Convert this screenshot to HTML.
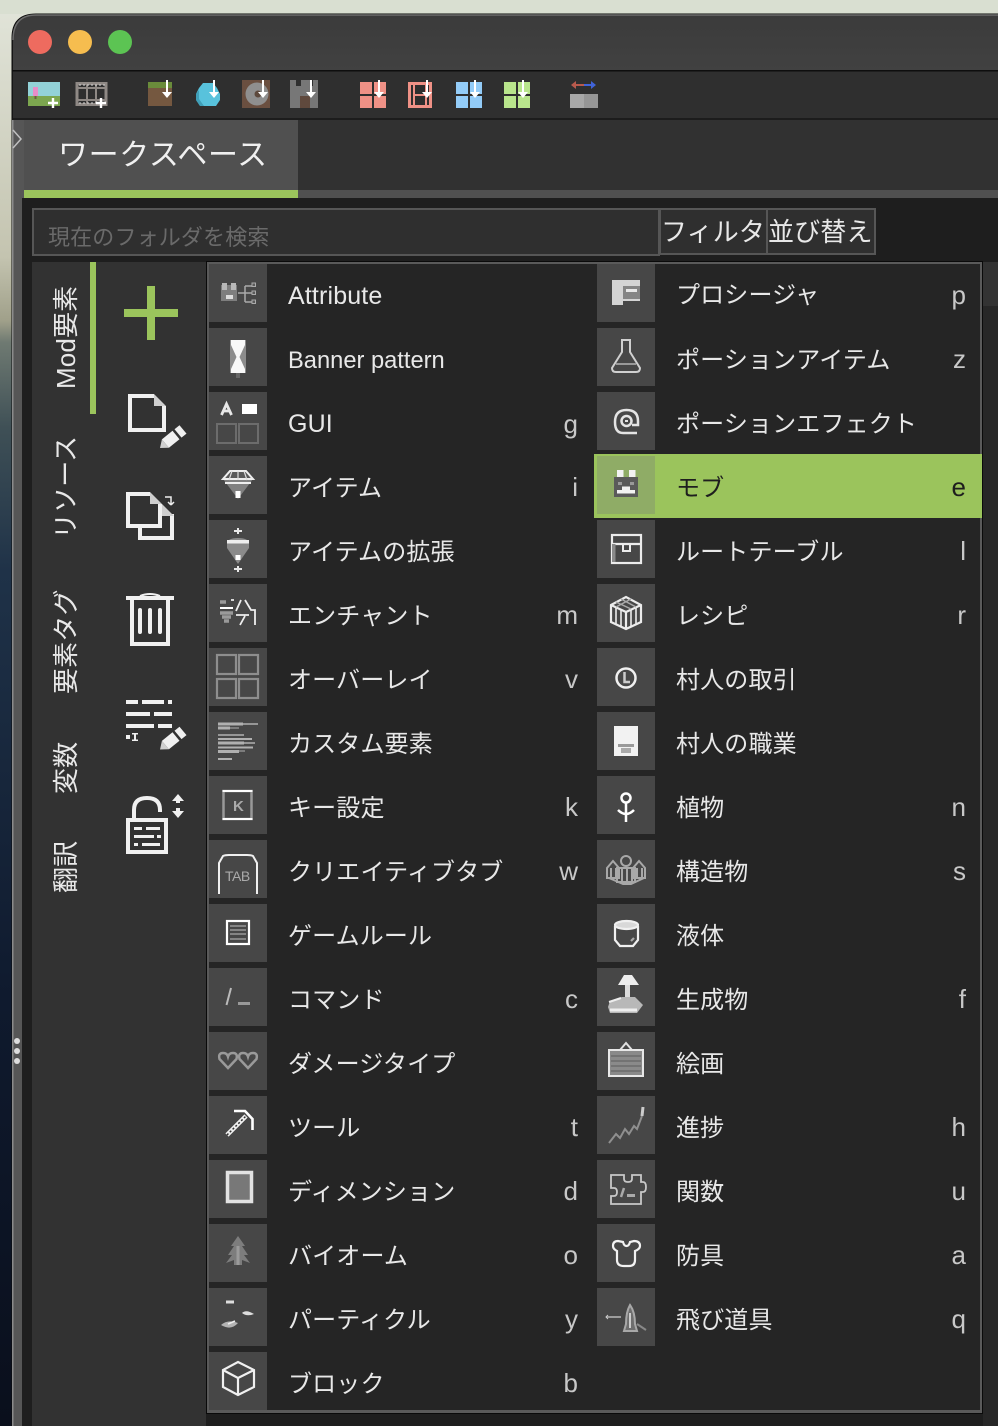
<!DOCTYPE html>
<html lang="ja"><head><meta charset="utf-8"><title>MCreator</title>
<style>
html,body{margin:0;padding:0;background:#1e1e1e}
svg{display:block}
text{font-family:"Liberation Sans","Noto Sans CJK JP",sans-serif;fill:#e8e8e8;font-size:24px;letter-spacing:.15px}
.s{fill:#c8c8c8;text-anchor:end;font-size:26px;letter-spacing:0}
</style></head><body>
<svg width="998" height="1426" viewBox="0 0 998 1426" xmlns="http://www.w3.org/2000/svg">
<defs>
<linearGradient id="bg" x1="0" y1="0" x2="0" y2="1">
<stop offset="0" stop-color="#e2e5da"/><stop offset=".18" stop-color="#c4c4b0"/><stop offset=".225" stop-color="#a0a08a"/><stop offset=".24" stop-color="#6f7a72"/><stop offset=".3" stop-color="#3f5056"/><stop offset=".4" stop-color="#1f3248"/><stop offset=".7" stop-color="#0f1a2e"/><stop offset="1" stop-color="#0a0f1c"/>
</linearGradient>
<linearGradient id="tb" x1="0" y1="0" x2="0" y2="1"><stop offset="0" stop-color="#3b3b3b"/><stop offset="1" stop-color="#414141"/></linearGradient>
<filter id="b" x="-2%" y="-2%" width="104%" height="104%"><feGaussianBlur stdDeviation=".35"/></filter>
</defs>
<!-- desktop -->
<rect width="998" height="1426" fill="url(#bg)"/>
<rect x="0" y="0" width="998" height="14" fill="#d9dfd1"/>
<!-- window -->
<path d="M12 1426V38Q12 14 36 14H998V1426Z" fill="#1e1e1e" stroke="#0c0c0c" stroke-width="1"/>
<path d="M13 70V38Q13 15 36 15H998V70Z" fill="url(#tb)"/>
<path d="M13 40Q13 15 36 15H998" fill="none" stroke="#6c6c6c" stroke-width="1.500"/>
<rect x="12" y="70" width="986" height="1.500" fill="#0e0e0e"/>
<rect x="13" y="71.500" width="985" height="46.500" fill="#2f2f2f"/>
<rect x="13" y="118" width="985" height="2" fill="#1c1c1c"/>
<circle cx="40" cy="42" r="12" fill="#ee6b5f"/><circle cx="80" cy="42" r="12" fill="#f6bd4f"/><circle cx="120" cy="42" r="12" fill="#5cc453"/>
<!-- toolbar icons -->
<g filter="url(#b)">
<rect x="28" y="82" width="32" height="14" fill="#93d2d8"/><rect x="28" y="96" width="32" height="10" fill="#7ba64f"/><rect x="33" y="87" width="5" height="9" fill="#e78dc8"/><rect x="34.500" y="96" width="2" height="3" fill="#6b5b3e"/>
<path d="M48 103H58M53 98V108" stroke="#fff" stroke-width="2.400"/>
<rect x="77" y="83.500" width="29" height="21" fill="none" stroke="#8f8985" stroke-width="3"/><path d="M77 88H106M77 100H106M87 84V105M96 84V105" stroke="#8f8985" stroke-width="2"/><path d="M79 85H105M79 103H105" stroke="#d8d8d8" stroke-width="1" stroke-dasharray="2 2"/>
<path d="M96 103H106M101 98V108" stroke="#fff" stroke-width="2.400"/>
<rect x="148" y="82" width="24" height="24" fill="#75583f"/><rect x="148" y="82" width="24" height="6" fill="#6a8c3b"/>
<path d="M203 83H213L217 88 220 94V100L216 106H200L196 100V94L199 88Z" fill="#58c2dc"/><path d="M196 94V100L200 106H204L199 99V90Z" fill="#3f9fb8"/>
<rect x="242" y="80" width="28" height="28" fill="#6a4f40"/><circle cx="257" cy="94" r="11.500" fill="#8f8f8f"/><circle cx="258" cy="94" r="3.500" fill="#5d4a3e"/>
<path d="M290 80h6v6h5v-6h11v6h1v-6h5v28h-28Z" fill="#777"/><rect x="300" y="96" width="10" height="12" fill="#5e4a3c"/>
<g fill="#ef9186"><rect x="360" y="82" width="12" height="12"/><rect x="374" y="82" width="12" height="12"/><rect x="360" y="96" width="12" height="12"/><rect x="374" y="96" width="12" height="12"/></g>
<rect x="409.500" y="83.500" width="21" height="23" fill="#2f2f2f" stroke="#ef9186" stroke-width="3"/><path d="M414 84V106M426 84V106M414 95H426" stroke="#ef9186" stroke-width="2"/>
<g fill="#93ccf8"><rect x="456" y="82" width="12" height="12"/><rect x="470" y="82" width="12" height="12"/><rect x="456" y="96" width="12" height="12"/><rect x="470" y="96" width="12" height="12"/></g>
<g fill="#b9e58c"><rect x="504" y="82" width="12" height="12"/><rect x="518" y="82" width="12" height="12"/><rect x="504" y="96" width="12" height="12"/><rect x="518" y="96" width="12" height="12"/></g>
<g fill="#fff" stroke="none">
<path d="M166 80h2v12h4l-5 6-5-6h4Z"/>
<path d="M213 80h2v12h4l-5 6-5-6h4Z"/><path d="M262 80h2v12h4l-5 6-5-6h4Z"/><path d="M310 80h2v12h4l-5 6-5-6h4Z"/><path d="M378 80h2v12h4l-5 6-5-6h4Z"/><path d="M426 80h2v12h4l-5 6-5-6h4Z"/><path d="M474 80h2v12h4l-5 6-5-6h4Z"/><path d="M522 80h2v12h4l-5 6-5-6h4Z"/>
</g>
<path d="M575 85H584" stroke="#b85a4e" stroke-width="2"/><path d="M571 85l5-4v8Z" fill="#b85a4e"/><path d="M584 85H592" stroke="#3f63d8" stroke-width="2"/><path d="M596 85l-5-4v8Z" fill="#3f63d8"/>
<rect x="570" y="94" width="14" height="14" fill="#a8a8a8"/><rect x="584" y="94" width="14" height="14" fill="#969696"/>
</g>
<!-- tab strip -->
<rect x="12" y="120" width="986" height="70" fill="#313131"/>
<rect x="24" y="120" width="274" height="70" fill="#505050"/>
<rect x="24" y="190" width="974" height="8" fill="#505050"/>
<rect x="24" y="190" width="274" height="8" fill="#9bc45c"/>
<text x="58" y="165" style="font-size:30px;fill:#f0f0f0;letter-spacing:.6px">ワークスペース</text>
<rect x="24" y="198" width="974" height="1228" fill="#1e1e1e"/>
<!-- left strip -->
<rect x="12" y="120" width="12" height="78" fill="#565656"/>
<rect x="12" y="198" width="10" height="1228" fill="#565656"/>
<rect x="12" y="120" width="1.500" height="1306" fill="#8b8b8b"/>
<rect x="22" y="198" width="10" height="1228" fill="#1e1e1e"/>
<path d="M13 130L21 139 13 148" fill="none" stroke="#c0c0c0" stroke-width="1.500"/>
<circle cx="17" cy="1041" r="3" fill="#ddd"/><circle cx="17" cy="1051" r="3" fill="#ddd"/><circle cx="17" cy="1061" r="3" fill="#ddd"/>
<!-- search -->
<rect x="33" y="209" width="626" height="46" fill="#2f2f2f" stroke="#565656" stroke-width="2"/>
<text x="48" y="245" style="font-size:22px;fill:#6a6a6a">現在のフォルダを検索</text>
<rect x="660" y="209" width="107" height="45" fill="#2f2f2f" stroke="#565656" stroke-width="2"/>
<rect x="767" y="209" width="108" height="45" fill="#2f2f2f" stroke="#565656" stroke-width="2"/>
<text x="661" y="241" style="font-size:26px">フィルタ</text>
<text x="768" y="241" style="font-size:26px">並び替え</text>
<!-- sidebar -->
<rect x="32" y="262" width="174" height="1164" fill="#323232"/>
<rect x="90" y="262" width="6" height="152" fill="#9bc45c"/>
<text transform="translate(75,389) rotate(-90)" style="font-size:26px">Mod要素</text>
<text transform="translate(75,539) rotate(-90)" style="font-size:26px">リソース</text>
<text transform="translate(75,694) rotate(-90)" style="font-size:26px">要素タグ</text>
<text transform="translate(75,794) rotate(-90)" style="font-size:26px">変数</text>
<text transform="translate(75,893) rotate(-90)" style="font-size:26px">翻訳</text>
<!-- sidebar icons -->
<path d="M124 313H178M151 286V340" stroke="#9bc45c" stroke-width="8"/>
<g fill="none" stroke="#f0f0f0" stroke-width="4">
<path d="M154 396H130V430H164V406"/>
<path d="M140 528V538H172V514"/>
<path d="M150 494H128V526H160V504"/>
<path d="M132 600V644H168V600"/>
<path d="M126 598H174"/><path d="M140 596Q150 592 160 596" stroke-width="2"/>
<path d="M140 610V632M150 610V632M160 610V632" stroke-linecap="round"/>
<path d="M134 819V810Q134 798 147 798Q160 798 160 810V812"/>
<rect x="128" y="820" width="38" height="32"/>
</g>
<path d="M154 394L166 406H154Z" fill="#cfcfcf"/><path d="M150 492L162 504H150Z" fill="#cfcfcf"/><path d="M162 504L174 516H162Z" fill="#cfcfcf"/>
<path d="M165 497H171V504M171 505l-3-3M171 505l3-3" fill="none" stroke="#eee" stroke-width="1.500"/>
<g fill="#f0f0f0">
<g id="pen"><path d="M160 448L161.900 439.400 165.400 443.600 168.900 447.800Z" fill="#cfcfcf"/><path d="M161.900 439.400L172.500 430.800 179.500 439.200 168.900 447.800Z"/><path d="M174.500 429.200L179.500 425.200 186.500 433.600 181.500 437.600Z"/></g>
<g transform="translate(0,301.500)"><path d="M160 448L161.900 439.400 165.400 443.600 168.900 447.800Z" fill="#cfcfcf"/><path d="M161.900 439.400L172.500 430.800 179.500 439.200 168.900 447.800Z"/><path d="M174.500 429.200L179.500 425.200 186.500 433.600 181.500 437.600Z"/></g>
<rect x="126" y="700" width="12" height="4"/><rect x="142" y="700" width="22" height="4"/><rect x="168" y="700" width="4" height="4"/>
<rect x="126" y="712" width="24" height="4"/><rect x="154" y="712" width="18" height="4"/>
<rect x="126" y="724" width="28" height="4"/><rect x="158" y="724" width="14" height="4"/>
<rect x="126" y="735" width="4" height="4"/><path d="M132 733h6v1.500h-2v5h2v1.500h-6v-1.500h2v-5h-2Z"/>
<rect x="134" y="827" width="8" height="3"/><rect x="146" y="827" width="14" height="3"/>
<rect x="134" y="835" width="20" height="3"/><rect x="157" y="835" width="4" height="3"/>
<rect x="134" y="843" width="4" height="3"/><rect x="142" y="843" width="18" height="3"/>
<path d="M178 794l6 7h-4v2h-4v-2h-4ZM178 818l-6-7h4v-3h4v3h4Z"/>
</g>
<!-- right side behind popup -->
<rect x="983" y="262" width="15" height="44" fill="#333"/><rect x="983" y="306" width="15" height="1120" fill="#272727"/>
<!-- popup -->
<rect x="206.500" y="261.500" width="776" height="1152" fill="#0a0a0a" stroke="#0a0a0a"/>
<rect x="207" y="262" width="775" height="1151" fill="#5a5a5a"/>
<rect x="209" y="264" width="771" height="1146" fill="#252525"/>
<!-- highlight -->
<rect x="594" y="454" width="388" height="64" fill="#9bc45c"/>
<!-- icon boxes -->
<g fill="#474747">
<rect x="209" y="264" width="58" height="58"/><rect x="209" y="328" width="58" height="58"/><rect x="209" y="392" width="58" height="58"/><rect x="209" y="456" width="58" height="58"/><rect x="209" y="520" width="58" height="58"/><rect x="209" y="584" width="58" height="58"/><rect x="209" y="648" width="58" height="58"/><rect x="209" y="712" width="58" height="58"/><rect x="209" y="776" width="58" height="58"/><rect x="209" y="840" width="58" height="58"/><rect x="209" y="904" width="58" height="58"/><rect x="209" y="968" width="58" height="58"/><rect x="209" y="1032" width="58" height="58"/><rect x="209" y="1096" width="58" height="58"/><rect x="209" y="1160" width="58" height="58"/><rect x="209" y="1224" width="58" height="58"/><rect x="209" y="1288" width="58" height="58"/><rect x="209" y="1352" width="58" height="58"/>
<rect x="597" y="264" width="58" height="58"/><rect x="597" y="328" width="58" height="58"/><rect x="597" y="392" width="58" height="58"/><rect x="597" y="520" width="58" height="58"/><rect x="597" y="584" width="58" height="58"/><rect x="597" y="648" width="58" height="58"/><rect x="597" y="712" width="58" height="58"/><rect x="597" y="776" width="58" height="58"/><rect x="597" y="840" width="58" height="58"/><rect x="597" y="904" width="58" height="58"/><rect x="597" y="968" width="58" height="58"/><rect x="597" y="1032" width="58" height="58"/><rect x="597" y="1096" width="58" height="58"/><rect x="597" y="1160" width="58" height="58"/><rect x="597" y="1224" width="58" height="58"/><rect x="597" y="1288" width="58" height="58"/>
</g>
<rect x="597" y="456" width="58" height="58" fill="#8fac66"/>
<!-- labels left -->
<text x="288" y="304" style="font-size:25px">Attribute</text>
<text x="288" y="368" style="font-size:23.700px;letter-spacing:0">Banner pattern</text>
<text x="288" y="432" style="font-size:25px">GUI</text><text class="s" x="578" y="433">g</text>
<text x="288" y="496">アイテム</text><text class="s" x="578" y="496">i</text>
<text x="288" y="560">アイテムの拡張</text>
<text x="288" y="624">エンチャント</text><text class="s" x="578" y="624">m</text>
<text x="288" y="688">オーバーレイ</text><text class="s" x="578" y="688">v</text>
<text x="288" y="752">カスタム要素</text>
<text x="288" y="816">キー設定</text><text class="s" x="578" y="816">k</text>
<text x="288" y="880">クリエイティブタブ</text><text class="s" x="578" y="880">w</text>
<text x="288" y="944">ゲームルール</text>
<text x="288" y="1008">コマンド</text><text class="s" x="578" y="1008">c</text>
<text x="288" y="1072">ダメージタイプ</text>
<text x="288" y="1136">ツール</text><text class="s" x="578" y="1136">t</text>
<text x="288" y="1200">ディメンション</text><text class="s" x="578" y="1200">d</text>
<text x="288" y="1264">バイオーム</text><text class="s" x="578" y="1264">o</text>
<text x="288" y="1328">パーティクル</text><text class="s" x="578" y="1328">y</text>
<text x="288" y="1392">ブロック</text><text class="s" x="578" y="1392">b</text>
<!-- labels right -->
<text x="676" y="303">プロシージャ</text><text class="s" x="966" y="304">p</text>
<text x="676" y="368">ポーションアイテム</text><text class="s" x="966" y="368">z</text>
<text x="676" y="432">ポーションエフェクト</text>
<text x="676" y="496" style="fill:#1e1e1e">モブ</text><text class="s" x="966" y="496" style="fill:#1e1e1e">e</text>
<text x="676" y="560">ルートテーブル</text><text class="s" x="966" y="560">l</text>
<text x="676" y="624">レシピ</text><text class="s" x="966" y="624">r</text>
<text x="676" y="688">村人の取引</text>
<text x="676" y="752">村人の職業</text>
<text x="676" y="816">植物</text><text class="s" x="966" y="816">n</text>
<text x="676" y="880">構造物</text><text class="s" x="966" y="880">s</text>
<text x="676" y="944">液体</text>
<text x="676" y="1008">生成物</text><text class="s" x="966" y="1008">f</text>
<text x="676" y="1072">絵画</text>
<text x="676" y="1136">進捗</text><text class="s" x="966" y="1136">h</text>
<text x="676" y="1200">関数</text><text class="s" x="966" y="1200">u</text>
<text x="676" y="1264">防具</text><text class="s" x="966" y="1264">a</text>
<text x="676" y="1328">飛び道具</text><text class="s" x="966" y="1328">q</text>
<!-- menu icons -->
<g filter="url(#b)">
<g transform="translate(209,264)">
<rect x="12" y="21" width="16" height="16" fill="#7e7e7e"/><rect x="13" y="19" width="5" height="7" fill="#b8b8b8"/><rect x="22" y="19" width="5" height="7" fill="#b8b8b8"/><rect x="17" y="31" width="7" height="4" fill="#ddd"/>
<path d="M29 29H44M36 22V38M36 22H43M36 38H43" stroke="#aaa" stroke-width="1.500" fill="none"/><g fill="#5a5a5a" stroke="#aaa" stroke-width="1"><rect x="43" y="19" width="3.500" height="3.500"/><rect x="43" y="27" width="3.500" height="3.500"/><rect x="43" y="36" width="3.500" height="3.500"/></g>
</g>
<g transform="translate(209,328)">
<rect x="21" y="12" width="16" height="33" fill="#8c8c8c"/><path d="M22 12H36V17L30.500 29 36 41V45H22V41L27.500 29 22 17Z" fill="#f8f8f8"/><rect x="27" y="45" width="4" height="5" fill="#666"/>
</g>
<g transform="translate(209,392)">
<path d="M12.500 23L17.500 12 22.500 23M15 19H20" fill="none" stroke="#e8e8e8" stroke-width="2.800"/><rect x="33" y="12" width="15" height="10" fill="#fff"/>
<rect x="8" y="32" width="19" height="19" fill="none" stroke="#6c6c6c" stroke-width="2"/><rect x="30" y="32" width="19" height="19" fill="none" stroke="#6c6c6c" stroke-width="2"/>
</g>
<g transform="translate(209,456)">
<path d="M21 15H37L44 23 29 43 14 23Z" fill="#808080"/><path d="M21 15H37L44 23 H14Z" fill="#5a5a5a" stroke="#eee" stroke-width="2"/><path d="M16 27H42" stroke="#eee" stroke-width="2"/><path d="M23 15L20 24M35 15L38 24M29 15V24" stroke="#ddd" stroke-width="1.200"/><rect x="26.500" y="35" width="5" height="7" fill="#fff"/>
</g>
<g transform="translate(209,520)">
<path d="M25 11H33M29 8V14M25 49H33M29 46V52" stroke="#e8e8e8" stroke-width="2"/><path d="M18 24Q18 18 29 18Q40 18 40 24V28L29 44 18 28Z" fill="#8a8a8a"/><rect x="18" y="20" width="22" height="3.500" fill="#eee"/><rect x="26.500" y="35" width="5" height="5" fill="#fff"/>
</g>
<g transform="translate(209,584)">
<path d="M11 18H17M11 29H24M13 33H22M15 37H20" stroke="#9a9a9a" stroke-width="3.500" fill="none"/><path d="M11 24H24" stroke="#fff" stroke-width="2"/>
<path d="M22 16H25M32 16L27 27M36 16L42 26H46V41M27 31H40M36 32L31 41" stroke="#eee" stroke-width="1.800" fill="none"/>
</g>
<g transform="translate(209,648)" fill="none" stroke="#8e8e8e" stroke-width="2.200"><rect x="8" y="7" width="19" height="19"/><rect x="30" y="7" width="19" height="19"/><rect x="8" y="31" width="19" height="19"/><rect x="30" y="31" width="19" height="19"/></g>
<g transform="translate(209,712)" stroke="#b0b0b0" fill="none">
<path d="M9 12H34" stroke-width="3"/><path d="M34 12H49" stroke-width="1.500"/><path d="M9 16H21" stroke-width="3"/><path d="M21 16H30" stroke-width="1"/><path d="M9 23H35" stroke-width="1.500"/><path d="M9 27H43" stroke-width="2"/><path d="M9 31H35" stroke-width="3"/><path d="M35 31H46" stroke-width="1.500"/><path d="M9 35.500H44" stroke-width="2"/><path d="M9 39.500H30" stroke-width="3"/><path d="M30 39H36" stroke-width="1"/><path d="M9 47H23" stroke-width="2"/>
</g>
<g transform="translate(209,776)">
<rect x="14.500" y="15" width="28" height="28" fill="none" stroke="#999" stroke-width="2.500"/><path d="M13.500 15H43.500M13.500 43H43.500" stroke="#fff" stroke-width="2"/>
<text x="24" y="35" style="font-size:15px;fill:#aaa;font-weight:bold">K</text>
</g>
<g transform="translate(209,840)">
<path d="M10 54V23L14 16Q16 15 20 15H38Q42 15 44 16L48 23V54" fill="none" stroke="#f0f0f0" stroke-width="2"/>
<text x="16" y="41" style="font-size:14px;fill:#aaa;letter-spacing:-.5px">TAB</text>
</g>
<g transform="translate(209,904)">
<rect x="18" y="17" width="22" height="23" fill="none" stroke="#fff" stroke-width="2.200"/><path d="M21 22H37M21 26H37M21 30H37M21 35H37" stroke="#999" stroke-width="1.600"/>
</g>
<g transform="translate(209,968)">
<path d="M22 20L17.500 37" stroke="#bbb" stroke-width="2"/><rect x="29" y="34" width="12" height="3" fill="#999"/>
</g>
<g transform="translate(209,1032)" fill="none" stroke="#9a9a9a" stroke-width="2.500">
<path d="M19 36L10.500 27Q9 21 14 21Q18 21 19 24.500Q20 21 24 21Q29 21 27.500 27Z"/><path d="M39 36L30.500 27Q29 21 34 21Q38 21 39 24.500Q40 21 44 21Q49 21 47.500 27Z"/>
</g>
<g transform="translate(209,1096)">
<path d="M18 39L37 20" stroke="#f0f0f0" stroke-width="4.500"/><path d="M18 39L37 20" stroke="#333" stroke-width="1.500" stroke-dasharray="2 2"/><path d="M25 15H36L43.500 23V34" fill="none" stroke="#fff" stroke-width="2.600"/>
</g>
<g transform="translate(209,1160)">
<rect x="18.500" y="12.500" width="24" height="29" fill="#787878" stroke="#e2e2e2" stroke-width="3.500"/>
</g>
<g transform="translate(209,1224)" fill="#7d7d7d">
<path d="M29 12L36 22H33L39 31H35L41 39 33 36V41H25V36L17 39 23 31H19L25 22H22Z"/><rect x="27.500" y="22" width="3" height="19" fill="#9b9b9b"/>
</g>
<g transform="translate(209,1288)">
<path d="M17 14H25" stroke="#ddd" stroke-width="3"/><path d="M33 25Q37 21 45 26 38 29 33 25Z" fill="#ddd"/><path d="M12 37Q19 31 29 35 22 43 12 37Z" fill="#b4b4b4"/><path d="M19 36L26 33" stroke="#eee" stroke-width="1.500"/>
</g>
<g transform="translate(209,1352)" fill="none" stroke="#f0f0f0" stroke-width="2.200">
<path d="M29 10L45 18V35L29 43 14 35V18ZM14 18L29 26 45 18M29 26V43"/>
</g>
<g transform="translate(597,264)">
<path d="M15 16H43V37H26V41H15Z" fill="#d4d4d4"/><rect x="26" y="22" width="17" height="13" fill="#858585"/><rect x="29" y="25" width="11" height="3" fill="#e8e8e8"/>
</g>
<g transform="translate(597,328)" fill="none" stroke="#d0d0d0" stroke-width="2">
<path d="M24 12H34M25 13V24L15 40Q15 44 19 44H39Q43 44 43 40L33 24V13"/><path d="M19 36H39" stroke="#999"/>
</g>
<g transform="translate(597,392)" fill="none" stroke="#e4e4e4" stroke-width="2.500">
<path d="M40 41H26Q18 41 18 30Q18 18 29.500 18Q41 18 41 29V33H35"/><circle cx="29.500" cy="29" r="5"/><rect x="28" y="28" width="3" height="2" fill="#e4e4e4" stroke="none"/>
</g>
<g transform="translate(597,456)">
<rect x="17" y="21" width="24" height="20" fill="#5a5a5a"/><rect x="20" y="14" width="6.500" height="7" fill="#f2f2f2"/><rect x="32" y="14" width="6.500" height="7" fill="#f2f2f2"/><rect x="21" y="26" width="4" height="3" fill="#999"/><rect x="33" y="26" width="4" height="3" fill="#999"/><path d="M20 37.500H38V34H33V30.500H25V34H20Z" fill="#f2f2f2"/>
</g>
<g transform="translate(597,520)">
<rect x="15" y="15" width="29" height="28" fill="none" stroke="#ececec" stroke-width="2.200"/><path d="M15 24H44" stroke="#ececec" stroke-width="2.200"/><rect x="26" y="24" width="7" height="7" fill="none" stroke="#ececec" stroke-width="2"/><rect x="15" y="24" width="3.500" height="18" fill="#8a8a8a"/>
</g>
<g transform="translate(597,584)" fill="none" stroke="#ececec" stroke-width="2.200">
<path d="M14 21L29 13 44 21V38L29 45 14 38ZM14 21L29 28 44 21M29 28V45"/><path d="M19 24V41M24 26V43M34 26V43M39 24V41" stroke-width="1.600"/><path d="M19 18L34 25M24 15L39 23M34 15L19 23" stroke="#aaa" stroke-width="1.500"/>
</g>
<g transform="translate(597,648)">
<circle cx="29" cy="30" r="9.500" fill="none" stroke="#f0f0f0" stroke-width="2.500"/><path d="M27.500 24V34H33" fill="none" stroke="#ccc" stroke-width="2.500"/>
</g>
<g transform="translate(597,712)">
<rect x="17" y="14" width="24" height="30" fill="#f2f2f2"/><rect x="21" y="32" width="16" height="3" fill="#9a9a9a"/><rect x="24" y="36" width="10" height="5" fill="#aaa"/>
</g>
<g transform="translate(597,776)">
<circle cx="29" cy="22" r="4.500" fill="none" stroke="#fff" stroke-width="2.500"/><path d="M29 27V46M21 34Q25 38 29 38Q33 38 37 34" fill="none" stroke="#fff" stroke-width="2.500"/>
</g>
<g transform="translate(597,840)" fill="none" stroke="#a8a8a8" stroke-width="2">
<circle cx="29" cy="21" r="5"/><path d="M10 28L16 21 22 28V38H10ZM36 28L42 21 48 28V38H36ZM20 28H38V42H20Z"/><path d="M14 28V38M19 28V38M25 28V43M30 28V43M35 28V43M40 28V38M45 28V38"/><path d="M12 38L26 44H34L47 38"/>
</g>
<g transform="translate(597,904)" fill="none" stroke="#f0f0f0" stroke-width="2.200">
<path d="M18 22V36L23 42H36L41 36V22"/><ellipse cx="29.500" cy="21" rx="11.500" ry="4" fill="#d8d8d8" stroke="#f0f0f0"/><path d="M34 37l3-3" stroke="#aaa"/>
</g>
<g transform="translate(597,968)">
<path d="M27 7L35 7 42 17H21Z" fill="#eee"/><rect x="28" y="17" width="5" height="14" fill="#ddd"/>
<path d="M13 33L25 29H38L46 37 40 45H13L11 39Z" fill="#b8b8b8"/><path d="M13 42H40" stroke="#eee" stroke-width="3"/><path d="M12 34L24 30" stroke="#eee" stroke-width="2"/>
</g>
<g transform="translate(597,1032)">
<path d="M23 18L29 11 35 18" fill="none" stroke="#e0e0e0" stroke-width="2"/><rect x="12" y="18" width="34" height="26" fill="#8a8a8a" stroke="#e8e8e8" stroke-width="2"/><path d="M14 24H44M14 29H44M14 34H44M14 39H44" stroke="#666" stroke-width="1.200"/>
</g>
<g transform="translate(597,1096)" fill="none" stroke="#8f8f8f" stroke-width="2">
<path d="M12 47L19 38 23 42 28 33 32 38 37 30 40 33 45 20"/><path d="M45 20L46 11" stroke="#ccc" stroke-width="3"/>
</g>
<g transform="translate(597,1160)">
<path d="M14 15H27V19Q27 22 31 22Q35 22 35 19V15H44V22H46Q49 22 49 27Q49 32 46 32H44V44H14V36H17Q20 36 20 32Q20 28 17 28H14Z" fill="none" stroke="#c8c8c8" stroke-width="1.800"/>
<path d="M27 28L24 37" stroke="#aaa" stroke-width="2.500"/><rect x="30" y="34" width="8" height="3" fill="#aaa"/>
</g>
<g transform="translate(597,1224)">
<path d="M21 17Q16 17 16 22Q16 25 20 27V36Q20 42 27 42H32Q38 42 38 36V27Q43 25 43 22Q43 17 37 17L33 18Q32 22 29.500 22Q27 22 26 18Z" fill="none" stroke="#f2f2f2" stroke-width="2.200"/>
</g>
<g transform="translate(597,1288)">
<path d="M9 29H24" stroke="#9c9c9c" stroke-width="2"/><path d="M11 27L9 29 11 31" stroke="#ccc" fill="none"/><path d="M33 17Q29 24 29 36L27 43H40L38 36Q38 24 33 17Z" fill="#6e6e6e" stroke="#a8a8a8" stroke-width="2"/><path d="M40 36L49 42" stroke="#888" stroke-width="2"/><path d="M33 25V40" stroke="#ccc" stroke-width="2"/>
</g>
</g>
</svg>
</body></html>
